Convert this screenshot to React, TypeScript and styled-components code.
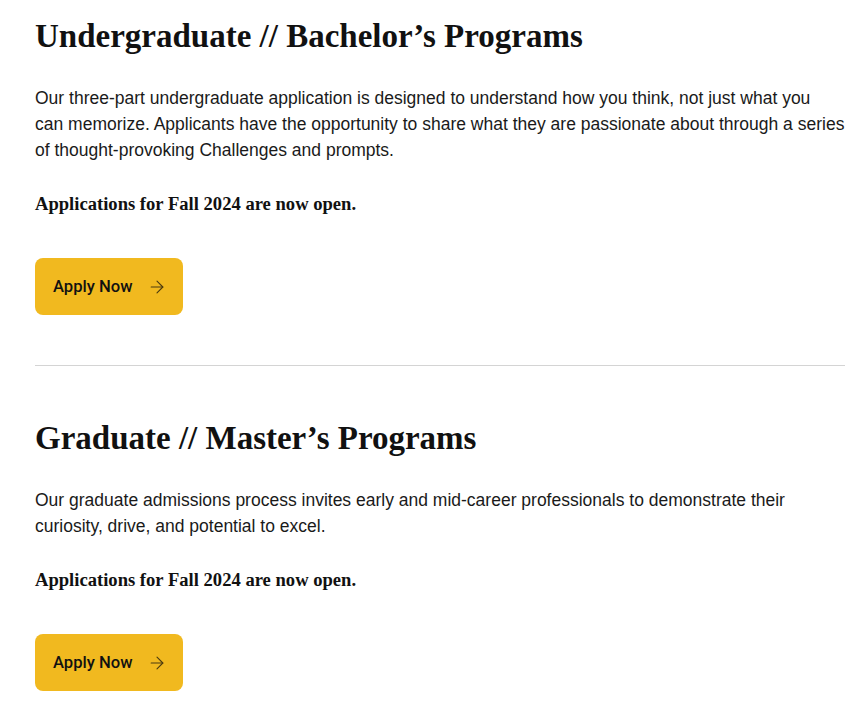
import React from 'react';
import styled, { createGlobalStyle } from 'styled-components';
import { ArrowRight } from 'lucide-react';

const GlobalStyle = createGlobalStyle`
  html, body {
    margin: 0;
    padding: 0;
    background: #fff;
  }
  body {
    font-family: "Liberation Sans", Arial, sans-serif;
    color: #111;
  }
`;

const Page = styled.main`
  width: 810px;
  margin-left: 35px;
`;

const Section = styled.section<{ $divider?: boolean }>`
  padding: 54px 0 50px;
  border-bottom: ${(p) => (p.$divider ? '1px solid #d4d4d4' : 'none')};

  &:first-child {
    padding-top: 18px;
  }
`;

const Title = styled.h2`
  margin: 0 0 31px;
  font-family: "Liberation Serif", "Times New Roman", serif;
  font-weight: 700;
  font-size: 33px;
  line-height: 36px;
  color: #111;
`;

const Description = styled.p`
  margin: 0 0 28px;
  font-size: 17.5px;
  line-height: 26px;
  color: #1a1a1a;
`;

const Notice = styled.p`
  margin: 0 0 41px;
  font-family: "Liberation Serif", "Times New Roman", serif;
  font-weight: 700;
  font-size: 18.6px;
  line-height: 26px;
  color: #111;
`;

const ApplyButton = styled.button`
  display: inline-flex;
  align-items: center;
  gap: 14px;
  height: 57px;
  padding: 0 16px 0 18px;
  border: none;
  border-radius: 8px;
  background-color: #f1b91f;
  color: #111;
  font-family: Roboto, "Liberation Sans", Arial, sans-serif;
  font-size: 16.6px;
  font-weight: 500;
  white-space: nowrap;
  cursor: pointer;

  svg {
    color: #4a3a10;
    flex-shrink: 0;
  }
`;

interface ProgramProps {
  title: string;
  description: React.ReactNode;
  divider?: boolean;
}

const Program: React.FC<ProgramProps> = ({ title, description, divider }) => (
  <Section $divider={divider}>
    <Title>{title}</Title>
    <Description>{description}</Description>
    <Notice>Applications for Fall 2024 are now open.</Notice>
    <ApplyButton>
      Apply Now
      <ArrowRight size={20} strokeWidth={1.3} />
    </ApplyButton>
  </Section>
);

export default function App() {
  return (
    <>
      <GlobalStyle />
      <Page>
        <Program
          divider
          title="Undergraduate // Bachelor’s Programs"
          description={
            <>
              Our three-part undergraduate application is designed to understand how you think, not just what you
              <br />
              can memorize. Applicants have the opportunity to share what they are passionate about through a series of
              thought-provoking Challenges and prompts.
            </>
          }
        />
        <Program
          title="Graduate // Master’s Programs"
          description="Our graduate admissions process invites early and mid-career professionals to demonstrate their curiosity, drive, and potential to excel."
        />
      </Page>
    </>
  );
}
